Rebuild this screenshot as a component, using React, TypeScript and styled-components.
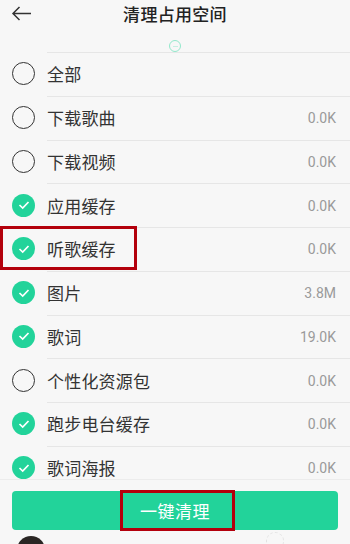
import React from "react";
import styled, { createGlobalStyle } from "styled-components";

const Global = createGlobalStyle`
  html, body { margin: 0; padding: 0; background: #f7f7f7; overflow: hidden; }
  body { font-family: "Noto Sans CJK SC", "Noto Sans", sans-serif; }
  * { box-sizing: border-box; }
`;

const Page = styled.div`
  width: 350px;
  height: 544px;
  display: flex;
  flex-direction: column;
  background: #f7f7f7;
  overflow: hidden;
`;

const Header = styled.div`
  height: 28px;
  display: flex;
  align-items: center;
  justify-content: center;
  position: relative;
`;

const Back = styled.div`
  position: absolute;
  left: 11px;
  top: 6px;
  width: 21px;
  height: 15px;
  display: flex;
`;

const Title = styled.div`
  font-size: 17px;
  font-weight: 500;
  color: #222;
  letter-spacing: 0.3px;
  line-height: 28px;
`;

const Refresh = styled.div`
  height: 25px;
  display: flex;
  justify-content: center;
  padding-top: 12px;
`;

const Spinner = styled.div`
  width: 12px;
  height: 12px;
  border-radius: 50%;
  border: 1.5px solid #92e8cb;
  display: flex;
  align-items: center;
  justify-content: center;
  &::after {
    content: "";
    width: 5px;
    height: 1px;
    background: #c4f1e1;
  }
`;

const List = styled.div`
  height: 427px;
  overflow: hidden;
  flex-shrink: 0;
`;

const Row = styled.div`
  height: 43.75px;
  display: flex;
  position: relative;
`;

const IconCell = styled.div`
  width: 47px;
  padding-left: 12px;
  display: flex;
  align-items: center;
`;

const Content = styled.div`
  flex: 1;
  display: flex;
  align-items: center;
  justify-content: space-between;
  border-top: 1px solid #e6e6e6;
  padding-right: 14px;
`;

const Label = styled.span`
  font-size: 17px;
  line-height: 20px;
  color: #333;
  letter-spacing: 0.2px;
`;

const Value = styled.span`
  font-family: Roboto, "Liberation Sans", sans-serif;
  font-size: 14px;
  line-height: 18px;
  color: #9a9a9a;
`;

const Ring = styled.div<{ $on: boolean }>`
  width: 23px;
  height: 23px;
  border-radius: 50%;
  border: ${(p) => (p.$on ? "none" : "1.6px solid #333")};
  background: ${(p) => (p.$on ? "#22d39a" : "transparent")};
  display: flex;
  align-items: center;
  justify-content: center;
`;

const Highlight = styled.div`
  position: absolute;
  left: 0;
  top: -1px;
  width: 137px;
  height: 44px;
  border: 3.5px solid #b3000c;
  pointer-events: none;
`;

const Bottom = styled.div`
  border-top: 1px solid #ececec;
  padding: 11px 12px 0;
  background: #f7f7f7;
`;

const Button = styled.div`
  height: 39px;
  border-radius: 4px;
  background: #22d39a;
  display: flex;
  align-items: center;
  justify-content: center;
  position: relative;
`;

const ButtonText = styled.span`
  color: #fff;
  font-size: 17px;
  letter-spacing: 0.5px;
`;

const ButtonHighlight = styled.div`
  position: absolute;
  left: 108px;
  top: -1px;
  width: 115px;
  height: 41px;
  border: 3.5px solid #b3000c;
`;

const Player = styled.div`
  height: 40px;
  display: flex;
  align-items: flex-start;
  padding: 6px 0 0 17px;
  position: relative;
`;

const Avatar = styled.div`
  width: 28px;
  height: 28px;
  border-radius: 50%;
  background: #2a2624;
`;

const Loader = styled.div`
  position: absolute;
  left: 266px;
  top: 2px;
  width: 18px;
  height: 18px;
  border-radius: 50%;
  border: 1.5px dashed #e2e2e2;
`;

const items: { label: string; value?: string; on: boolean; mark?: boolean }[] = [
  { label: "全部", on: false },
  { label: "下载歌曲", value: "0.0K", on: false },
  { label: "下载视频", value: "0.0K", on: false },
  { label: "应用缓存", value: "0.0K", on: true },
  { label: "听歌缓存", value: "0.0K", on: true, mark: true },
  { label: "图片", value: "3.8M", on: true },
  { label: "歌词", value: "19.0K", on: true },
  { label: "个性化资源包", value: "0.0K", on: false },
  { label: "跑步电台缓存", value: "0.0K", on: true },
  { label: "歌词海报", value: "0.0K", on: true },
];

export default function App() {
  return (
    <Page>
      <Global />
      <Header>
        <Back>
          <svg width="21" height="15" viewBox="0 0 21 15" fill="none">
            <path d="M20 7.5H2M8.5 1L2 7.5L8.5 14" stroke="#333" strokeWidth="1.5" />
          </svg>
        </Back>
        <Title>清理占用空间</Title>
      </Header>
      <Refresh>
        <Spinner />
      </Refresh>
      <List>
        {items.map((it) => (
          <Row key={it.label}>
            <IconCell>
              <Ring $on={it.on}>
                {it.on && (
                  <svg width="12" height="10" viewBox="0 0 12 10" fill="none">
                    <path d="M1.5 5L4.7 8L10.5 2" stroke="#fff" strokeWidth="1.7" />
                  </svg>
                )}
              </Ring>
            </IconCell>
            <Content>
              <Label>{it.label}</Label>
              {it.value && <Value>{it.value}</Value>}
            </Content>
            {it.mark && <Highlight />}
          </Row>
        ))}
      </List>
      <Bottom>
        <Button>
          <ButtonText>一键清理</ButtonText>
          <ButtonHighlight />
        </Button>
      </Bottom>
      <Player>
        <Avatar />
        <Loader />
      </Player>
    </Page>
  );
}
